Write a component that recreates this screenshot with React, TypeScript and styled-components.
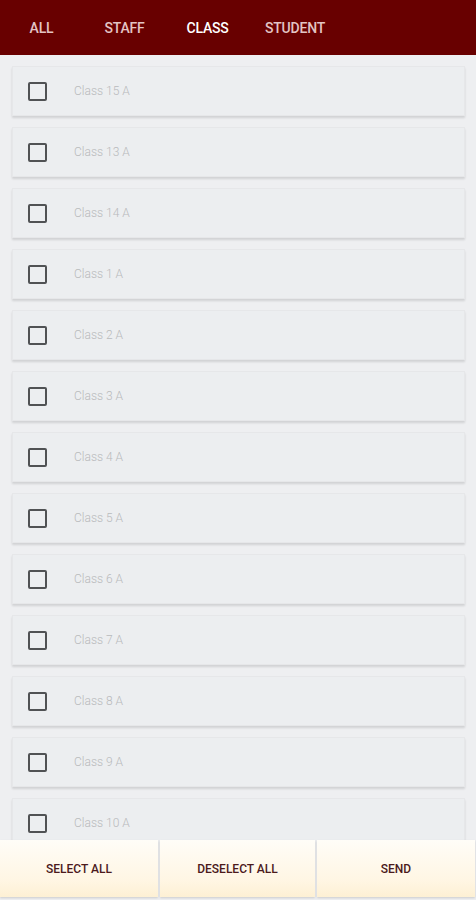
import { createGlobalStyle } from 'styled-components'
import styled from 'styled-components'

const GlobalStyle = createGlobalStyle`
  html, body {
    margin: 0;
    padding: 0;
    background: #eeeff1;
    font-family: Roboto, 'Liberation Sans', Arial, sans-serif;
  }
`

const tabs = ['ALL', 'STAFF', 'CLASS', 'STUDENT']
const activeTab = 'CLASS'

const classes = [
  'Class 15 A',
  'Class 13 A',
  'Class 14 A',
  'Class 1 A',
  'Class 2 A',
  'Class 3 A',
  'Class 4 A',
  'Class 5 A',
  'Class 6 A',
  'Class 7 A',
  'Class 8 A',
  'Class 9 A',
  'Class 10 A',
]

const actions = ['SELECT ALL', 'DESELECT ALL', 'SEND']

export default function App() {
  return (
    <>
      <GlobalStyle />
      <Screen>
        <TabBar>
          {tabs.map((tab) => (
            <Tab key={tab} $active={tab === activeTab}>
              {tab}
            </Tab>
          ))}
        </TabBar>

        <List>
          {classes.map((name) => (
            <Card key={name}>
              <Checkbox />
              <Label>{name}</Label>
            </Card>
          ))}
        </List>

        <Footer>
          {actions.map((action) => (
            <ActionButton key={action}>{action}</ActionButton>
          ))}
        </Footer>
      </Screen>
    </>
  )
}

const Screen = styled.div`
  display: flex;
  flex-direction: column;
  height: 900px;
  overflow: hidden;
`

const TabBar = styled.div`
  display: grid;
  grid-template-columns: 83px 83px 83px 92px;
  align-items: center;
  height: 55px;
  background: #680000;
  flex-shrink: 0;
`

const Tab = styled.div<{ $active: boolean }>`
  text-align: center;
  font-size: 14px;
  font-weight: 500;
  color: ${({ $active }) => ($active ? '#ffffff' : '#e3c4c4')};
  letter-spacing: -0.2px;
`

const List = styled.div`
  flex: 1;
  overflow: hidden;
  display: flex;
  flex-direction: column;
  gap: 11px;
  padding: 11px 11px 0 12px;
`

const Card = styled.div`
  display: flex;
  align-items: center;
  flex-shrink: 0;
  height: 50px;
  padding-left: 15px;
  background: #eceef0;
  border: 1px solid #e6e7e9;
  box-shadow: 0 2px 2px rgba(0, 0, 0, 0.12);
  box-sizing: border-box;
`

const Checkbox = styled.span`
  width: 19px;
  height: 19px;
  box-sizing: border-box;
  border: 2px solid #505254;
  border-radius: 2px;
  flex-shrink: 0;
`

const Label = styled.span`
  margin-left: 27px;
  font-size: 12px;
  font-weight: 300;
  color: #b9babc;
`

const Footer = styled.div`
  display: grid;
  grid-template-columns: 158px 155px 158px;
  gap: 2px;
  padding-bottom: 3px;
  background: #eeeff1;
  flex-shrink: 0;
  margin-top: -1px;
`

const ActionButton = styled.div`
  display: flex;
  align-items: center;
  justify-content: center;
  height: 57px;
  background: linear-gradient(to bottom, #fffdf8 0%, #fff6e4 70%, #fdf0d4 100%);
  box-shadow: 0 1px 2px rgba(0, 0, 0, 0.15);
  font-size: 12px;
  font-weight: 500;
  color: #4b1a1c;
`
